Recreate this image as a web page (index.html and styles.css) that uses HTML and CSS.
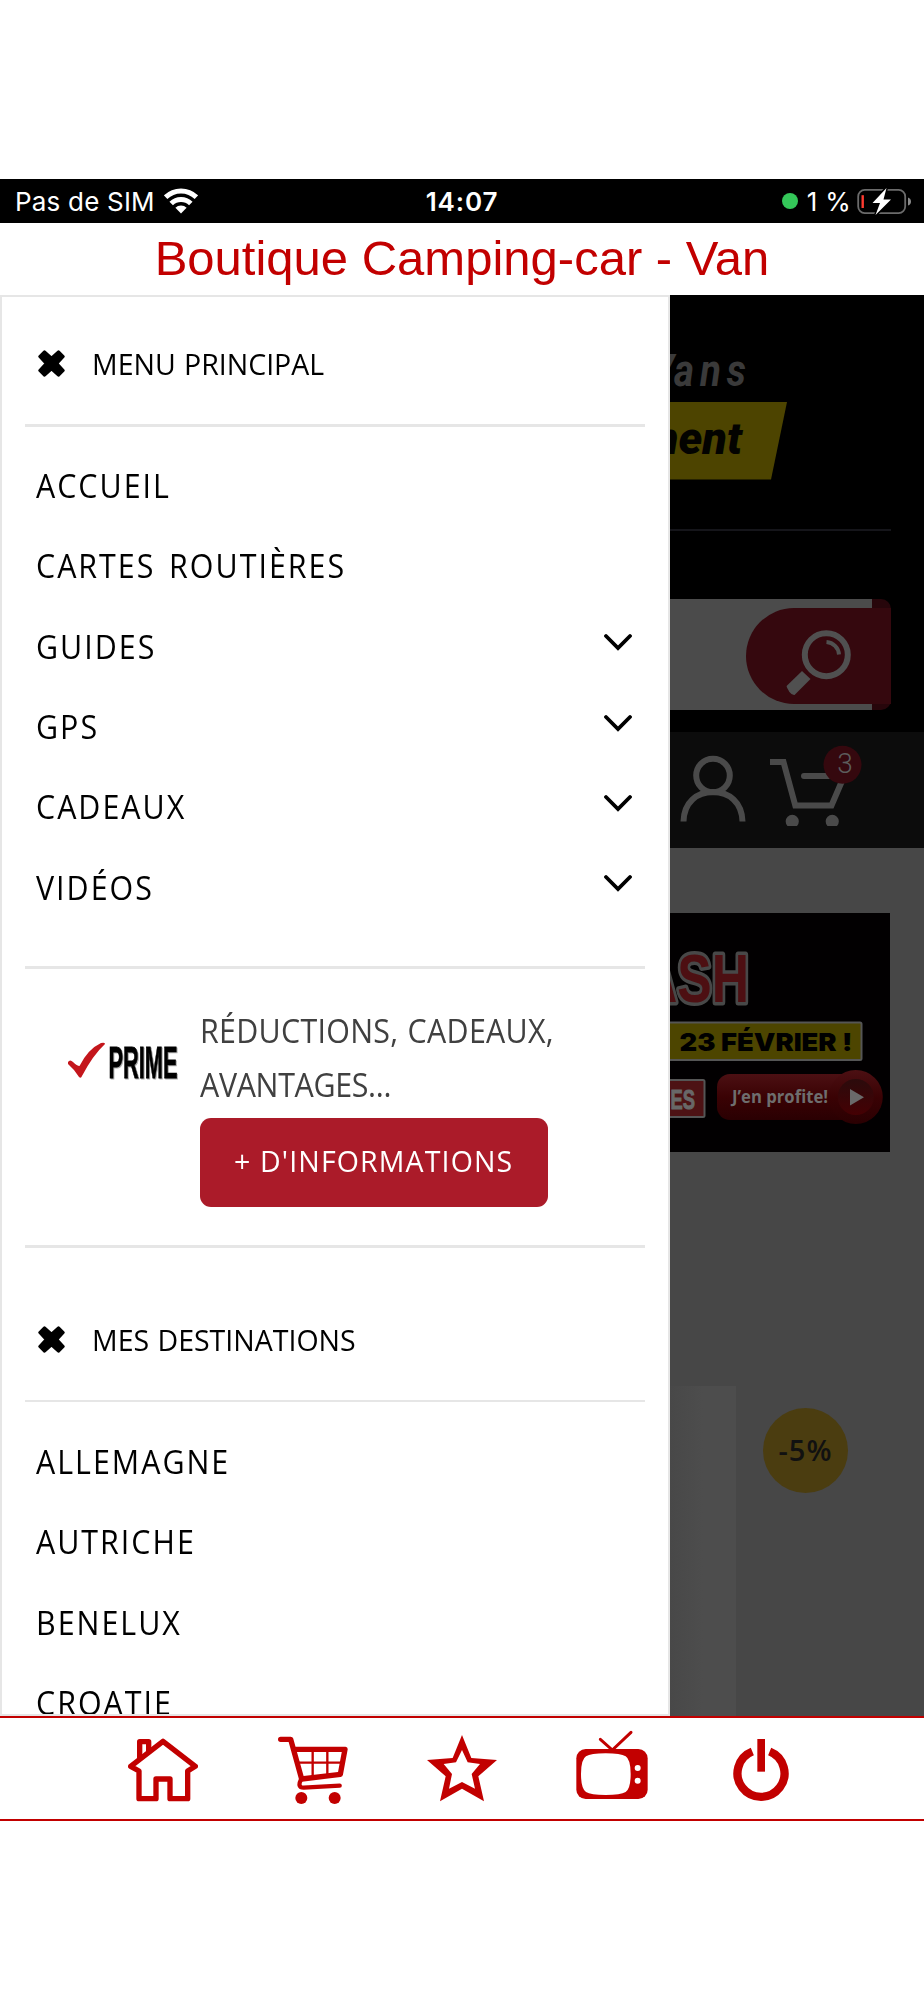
FILE: index.html
```html
<!DOCTYPE html>
<html lang="fr">
<head>
<meta charset="utf-8">
<title>Boutique Camping-car - Van</title>
<link rel="stylesheet" href="styles.css">
</head>
<body>
<div class="screen">
  <header class="status">
    <div class="status-left">
      <span>Pas de SIM</span>
      <svg width="34" height="26" viewBox="0 0 34 26" fill="none" stroke="#fff" stroke-width="5">
        <path d="M1.6 9.2a22 22 0 0 1 30.8 0"/>
        <path d="M7.2 15.500a14 14 0 0 1 19.6 0"/>
        <path d="M17 25.500l-5.600-5.700a8 8 0 0 1 11.2 0z" fill="#fff" stroke="none"/>
      </svg>
    </div>
    <span class="clock">14:07</span>
    <div class="status-right">
      <i class="dot"></i>
      <span>1 %</span>
      <svg width="56" height="28" viewBox="0 0 56 28">
        <rect x="1.2" y="2.9" width="47" height="23.2" rx="6.5" fill="none" stroke="#6b6b6b" stroke-width="1.8"/>
        <path d="M51 10.5q3 1 3 4t-3 4z" fill="#8a8a8a"/>
        <path d="M5.7 8.2v12.8" stroke="#ff3b30" stroke-width="2.4"/>
        <path d="M29.500 1L15.500 16H23l-4.500 12L34 12.500H26.500z" fill="#fff" stroke="#000" stroke-width="3" paint-order="stroke"/>
      </svg>
    </div>
  </header>
  <h1 class="title">Boutique Camping-car - Van</h1>

  <main class="stage">
    <aside class="drawer">
      <div class="heading">
        <svg class="cross" viewBox="0 0 27 27"><path d="M6.500 1.800L13.500 8.200L20.500 1.800L25.200 6.500L18.800 13.500L25.200 20.500L20.500 25.200L13.500 18.800L6.500 25.200L1.800 20.500L8.200 13.500L1.800 6.500z"/></svg>
        <span class="label">MENU PRINCIPAL</span>
      </div>
      <hr>
      <ul class="menu">
        <li><span class="label">ACCUEIL</span></li>
        <li><span class="label">CARTES ROUTIÈRES</span></li>
        <li><span class="label">GUIDES</span><svg class="chev" viewBox="0 0 28 18"><path d="M2 3l12 12L26 3"/></svg></li>
        <li><span class="label">GPS</span><svg class="chev" viewBox="0 0 28 18"><path d="M2 3l12 12L26 3"/></svg></li>
        <li><span class="label">CADEAUX</span><svg class="chev" viewBox="0 0 28 18"><path d="M2 3l12 12L26 3"/></svg></li>
        <li><span class="label">VIDÉOS</span><svg class="chev" viewBox="0 0 28 18"><path d="M2 3l12 12L26 3"/></svg></li>
      </ul>
      <hr>
      <section class="prime">
        <svg class="prime-logo" width="116" height="42" viewBox="0 0 116 42">
          <path d="M2 22q2-3 5 0q4 4 6.500 4Q22 9 35 3q4-1 4 1Q27 15 16 36q-1 3-3 1Q8 29 2 24z" fill="#c4161c"/>
          <text class="prime-word" x="42.500" y="37.500" textLength="69" lengthAdjust="spacingAndGlyphs">PRIME</text>
        </svg>
        <div class="prime-body">
          <p class="prime-text">RÉDUCTIONS, CADEAUX,<br><span class="tight">AVANTAGES...</span></p>
          <a class="button"><span class="label">+ D'INFORMATIONS</span></a>
        </div>
      </section>
      <hr>
      <div class="heading second">
        <svg class="cross" viewBox="0 0 27 27"><path d="M6.500 1.800L13.500 8.200L20.500 1.800L25.200 6.500L18.800 13.500L25.200 20.500L20.500 25.200L13.500 18.800L6.500 25.200L1.800 20.500L8.200 13.500L1.800 6.500z"/></svg>
        <span class="label">MES DESTINATIONS</span>
      </div>
      <hr>
      <ul class="menu last">
        <li><span class="label">ALLEMAGNE</span></li>
        <li><span class="label">AUTRICHE</span></li>
        <li><span class="label">BENELUX</span></li>
        <li><span class="label">CROATIE</span></li>
      </ul>
    </aside>

    <div class="page">
      <div class="masthead">
        <svg class="brand" viewBox="670 295 254 234">
          <text class="brand-top" x="645" y="386">V</text>
          <text class="brand-top" x="674" y="386" textLength="78" lengthAdjust="spacingAndGlyphs">ans</text>
          <path d="M670 402H787L771 479.500H670z" fill="#4d4400"/>
          <text class="brand-sub" x="742" y="454" text-anchor="end">ment</text>
        </svg>
        <div class="search">
          <div class="search-go">
            <svg width="70" height="70" viewBox="782 625 70 70" fill="none" stroke="#505050">
              <circle cx="826.300" cy="654.700" r="21.500" stroke-width="6"/>
              <path d="M826.500 642a13.500 13.500 0 0 1 12.500 12.500" stroke-width="4"/>
              <path d="M802 671l8.500 8L794 695.500H785.500V687z" fill="#505050" stroke="none"/>
            </svg>
          </div>
        </div>
      </div>
      <div class="tools">
        <svg width="254" height="116" viewBox="670 732 254 116" fill="none" stroke="#4a4a4a" stroke-width="6">
          <circle cx="713" cy="775.500" r="16.800"/>
          <path d="M683.500 821.500C684 802 697 792 713 792S742 802 742.500 821.500"/>
          <path d="M770 762h13.500l11.800 43.500h36.200l12-28"/>
          <path d="M804 776h30" stroke-linecap="round"/>
          <path d="M787.500 826a6.600 6.600 0 1 1 9.500 0zM827.500 826a6.600 6.600 0 1 1 9.500 0z" fill="#4a4a4a" stroke="none"/>
          <circle cx="842.500" cy="764.700" r="19" fill="#35080e" stroke="none"/>
          <text class="count" x="845" y="772.500" text-anchor="middle">3</text>
        </svg>
      </div>
      <svg class="promo" width="220" height="239" viewBox="670 913 220 239">
        <defs>
          <linearGradient id="red" x1="0" y1="0" x2="0" y2="1"><stop offset="0" stop-color="#4c1013"/><stop offset=".5" stop-color="#3a0204"/><stop offset="1" stop-color="#2a0002"/></linearGradient>
          <linearGradient id="disc" x1="0" y1="0" x2="0" y2="1"><stop offset="0" stop-color="#2b0b0c"/><stop offset="1" stop-color="#450003"/></linearGradient>
        </defs>
        <path d="M670 913h220v239H670z" fill="#020001"/>
        <text class="flash" x="640" y="1001.500" textLength="109" lengthAdjust="spacingAndGlyphs">ASH</text>
        <rect x="660" y="1022.500" width="201.500" height="37.500" rx="1.500" fill="#4d4500" stroke="#555" stroke-width="2"/>
        <text class="until" x="679.500" y="1051" textLength="173" lengthAdjust="spacingAndGlyphs">23 FÉVRIER !</text>
        <rect x="650" y="1080" width="54.500" height="37" rx="1.500" fill="#4d1214" stroke="#555" stroke-width="2"/>
        <text class="tag" x="670.500" y="1108.500" textLength="24.500" lengthAdjust="spacingAndGlyphs">ES</text>
        <rect x="717" y="1074" width="150" height="46" rx="13" fill="url(#red)"/>
        <circle cx="855.800" cy="1097" r="27" fill="url(#red)"/>
        <circle cx="855.800" cy="1097" r="18" fill="url(#disc)"/>
        <path d="M850 1089l14 8.300l-14 8.300z" fill="#6a6a6a"/>
        <text class="enjoy" x="732" y="1103" textLength="96" lengthAdjust="spacingAndGlyphs">J’en profite!</text>
      </svg>
      <div class="shelf">
        <div class="card"></div>
        <div class="discount">-5%</div>
      </div>
    </div>
  </main>

  <nav class="tabbar">
    <a><svg width="70" height="75" viewBox="84 90 210 225" fill="none" stroke="#c20000" stroke-width="16" stroke-linejoin="round">
      <path d="M92 199L189 124L286 199L263 213V296H210V237H168V296H117V213z"/>
      <path d="M119 176V125H146V153"/>
    </svg></a>
    <a><svg width="70" height="75" viewBox="533 90 210 225" fill="none" stroke="#c20000" stroke-width="16" stroke-linejoin="round" stroke-linecap="round">
      <path d="M541 118H571L604 237L720 223L734 148H584"/>
      <path d="M602 238Q590 263 610 263L718 257" stroke-width="13"/>
      <path d="M637 152V230M681 152V226M594 188H724" stroke-width="7"/>
      <circle cx="603" cy="294" r="18" fill="#c20000" stroke="none"/><circle cx="703" cy="294" r="18" fill="#c20000" stroke="none"/>
    </svg></a>
    <a><svg width="70" height="75" viewBox="981 90 210 225">
      <path fill="#c20000" fill-rule="evenodd" d="M1086 105L1114 174L1191 180L1135 229L1152 304L1086 266L1020 304L1037 229L981 180L1058 174zM1086 150L1103 187L1140 192L1115 222L1125 266L1086 246L1047 266L1056 222L1031 192L1068 187z"/>
    </svg></a>
    <a><svg width="72" height="75" viewBox="226 90 216 225">
      <path d="M299 118L335 150L391 97" fill="none" stroke="#c20000" stroke-width="9" stroke-linecap="round"/>
      <rect x="227" y="147" width="214" height="150" rx="28" fill="#c20000"/>
      <path d="M241 222Q241 178 256 169Q270 160 315 160T375 169Q390 178 390 222T375 276Q360 285 315 285T256 276Q241 266 241 222z" fill="#fff"/>
      <circle cx="411" cy="204" r="9" fill="#fff"/><circle cx="411" cy="242" r="9" fill="#fff"/>
    </svg></a>
    <a><svg width="56" height="75" viewBox="699 90 168 225" fill="none" stroke="#c20000">
      <path d="M757 154.500A70.500 70.500 0 1 0 809 154.500" stroke-width="25"/>
      <path d="M783.500 117V215" stroke-width="23"/>
    </svg></a>
  </nav>
</div>
</body>
</html>
```
FILE: styles.css
```css
* { box-sizing: border-box; }
body { margin: 0; background: #fff; font-family: "Open Sans", sans-serif; color: #000; }
.screen { width: 924px; height: 2000px; padding-top: 178.5px; overflow: hidden; }

.status {
  display: grid; grid-template-columns: 1fr auto 1fr; align-items: center;
  height: 44.5px; padding: 1px 11px 0 15px;
  background: #000; color: #fff; font: 26px Inter, sans-serif;
}
.status-left, .status-right { display: flex; align-items: center; }
.status-left { gap: 9px; letter-spacing: .2px; }
.status-right { justify-content: flex-end; }
.status-right span { margin: 0 6px 0 9px; letter-spacing: .3px; }
.clock { font-weight: 600; letter-spacing: .9px; margin-left: -4px; }
.dot { width: 16px; height: 16px; border-radius: 50%; background: #34c759; }

.title {
  margin: 0; height: 72px; text-align: center;
  font: 400 49px/70px "Liberation Sans", sans-serif; color: #c20000;
}

.stage { display: flex; height: 1421px; }
.drawer {
  flex: none; width: 670px; overflow: hidden; background: #fff;
  border: 2.5px solid #e6e6e6; padding: 0 23px 0 22.5px;
}
.drawer hr { margin: 0; height: 2.5px; border: 0; background: #e6e6e6; }
.label { display: inline-block; transform: scaleX(.95); transform-origin: left center; white-space: nowrap; }

.heading { display: flex; align-items: center; height: 127px; padding: 6px 0 0 13px; font-size: 30px; word-spacing: 1px; }
.heading.second { height: 152px; padding-top: 31px; }
.cross { width: 27px; height: 27px; margin-right: 27px; stroke: #000; stroke-width: 3; stroke-linejoin: round; }

.menu { list-style: none; margin: 19px 0 39px; padding: 0 13px 0 11px; font-size: 32px; letter-spacing: 2.1px; word-spacing: 4px; }
.menu li { display: flex; align-items: center; justify-content: space-between; height: 80.33px; }
.menu.last { margin-bottom: 0; }
.chev { width: 28px; height: 18px; margin-bottom: 8px; fill: none; stroke: #000; stroke-width: 3.8; stroke-linecap: round; }

.prime { display: flex; height: 276.5px; padding: 35px 0 0 41px; }
.prime-logo { margin: 36px 18px 0 0; overflow: visible; }
.prime-word { font: bold 45px "Liberation Sans", sans-serif; stroke: #000; stroke-width: .8; filter: drop-shadow(1.5px 1.5px 0 #aaa); }
.prime-text {
  margin: 0; font-size: 32px; line-height: 53.7px; color: #404040; white-space: nowrap;
  letter-spacing: .3px; word-spacing: 1px; transform: scaleX(.95); transform-origin: left center;
}
.tight { letter-spacing: -.35px; }
.button {
  display: flex; align-items: center; width: 348px; height: 89px; margin-top: 6.5px; padding: 0 0 4px 34px;
  border-radius: 11px; background: #ab1b29; color: #fff; font-size: 30px; letter-spacing: 1.2px;
}

.page { flex: 1; min-width: 0; display: flex; flex-direction: column; background: #474747; }
.masthead { height: 437px; background: #000; }
.brand { display: block; width: 254px; height: 234px; }
.brand-top { font: italic 700 45px Roboto, sans-serif; fill: #3a3a3a; letter-spacing: 7px; }
.brand-sub { font: italic 900 45px Roboto, sans-serif; fill: #030300; }
.search { width: 220.5px; padding-top: 69.5px; background: linear-gradient(#15151a 2px, #000 2px); }
.search-go {
  display: flex; justify-content: flex-end;
  height: 111.5px; padding: 9px 0 6px; border-radius: 0 10px 10px 0;
  background: linear-gradient(90deg, #4b4b4b 202.5px, #27060b 202.5px);
}
.search-go svg { box-sizing: content-box; padding: 17px 39px 9px 36px; border-radius: 48px 0 0 48px; background: #35080e; }

.tools { height: 116px; background: #0c0c0c; }
.tools svg { display: block; }
.count { font: 300 28px Roboto, sans-serif; fill: #5c5c5c; stroke: none; }

.promo { flex: none; margin-top: 65px; }
.flash { font: bold 69px "Liberation Sans", sans-serif; fill: #4d0f12; stroke: #484848; stroke-width: 7; stroke-linejoin: round; paint-order: stroke; }
.until { font: 900 25px Inter, "Liberation Sans", sans-serif; fill: #000; }
.tag { font: bold 28px "Liberation Sans", sans-serif; fill: #686868; stroke: #686868; }
.enjoy { font: bold 18px "Open Sans", sans-serif; fill: #6e6e6e; }

.shelf { flex: 1; display: flex; gap: 27px; margin-top: 234px; }
.card { width: 66px; background: linear-gradient(90deg, #484848, #4d4d4d 50%); }
.discount {
  width: 85px; height: 85px; margin-top: 22px; border-radius: 50%; background: #4b3d10;
  color: #111; font-size: 29px; font-weight: 600; line-height: 83px; text-align: center; letter-spacing: 1px;
}

.tabbar {
  display: flex; height: 105px; padding: 12px 0 0 88.5px;
  border-top: 2.5px solid #c20000; border-bottom: 2.5px solid #c20000; background: #fff;
}
.tabbar a { display: flex; flex: none; width: 149.5px; justify-content: center; }
```
